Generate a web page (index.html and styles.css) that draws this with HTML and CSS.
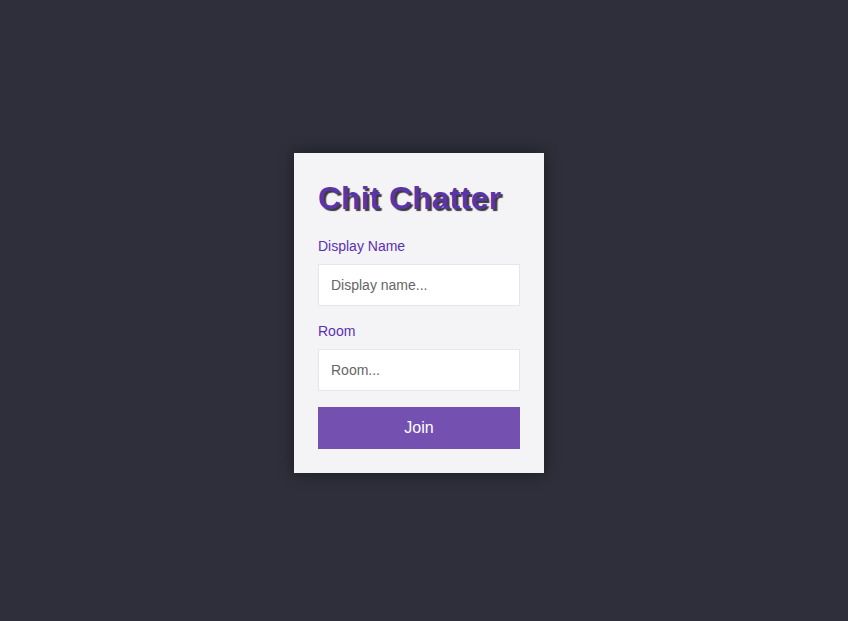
FILE: index.html
```html
<!DOCTYPE html>
<html>
<head>
<meta charset="utf-8">
<link rel="stylesheet" href="styles.css">
</head>
<body>
<main class="page">
  <form class="card">
    <h1 class="title">Chit Chatter</h1>
    <label class="label" for="name">Display Name</label>
    <input class="input" id="name" type="text" placeholder="Display name...">
    <label class="label label-room" for="room">Room</label>
    <input class="input" id="room" type="text" placeholder="Room...">
    <button class="join" type="button">Join</button>
  </form>
</main>
</body>
</html>
```
FILE: styles.css
```css
html, body {
  margin: 0;
  padding: 0;
  height: 100%;
}
body {
  background: #2e2f3a;
  font-family: "Liberation Sans", Arial, sans-serif;
}
.page {
  height: 100%;
  box-sizing: border-box;
  display: flex;
  align-items: center;
  justify-content: center;
  padding: 5px 10px 0 0;
}
.card {
  width: 250px;
  box-sizing: border-box;
  background: #f4f4f6;
  padding: 24px;
  display: flex;
  flex-direction: column;
  box-shadow: 0 0 14px rgba(0, 0, 0, 0.45);
}
.title {
  margin: 3px 0 21px;
  font-size: 32px;
  line-height: 37px;
  font-weight: 700;
  color: #5a34ab;
  text-shadow: 2px 2px 1px #3a3a3a;
}
.label {
  font-size: 14px;
  line-height: 16px;
  color: #5b30b3;
  margin-bottom: 10px;
}
.label-room {
  margin-top: 17px;
}
.input {
  height: 42px;
  box-sizing: border-box;
  border: 1px solid #e6e6e8;
  background: #fff;
  padding: 0 12px;
  font-family: "Liberation Sans", Arial, sans-serif;
  font-size: 14px;
  color: #333;
  outline: none;
  margin: 0;
}
.input::placeholder {
  color: #666;
}
.join {
  margin-top: 16px;
  height: 42px;
  border: none;
  background: #7451b1;
  color: #fff;
  font-family: "Liberation Sans", Arial, sans-serif;
  font-size: 16px;
  cursor: pointer;
}
```
